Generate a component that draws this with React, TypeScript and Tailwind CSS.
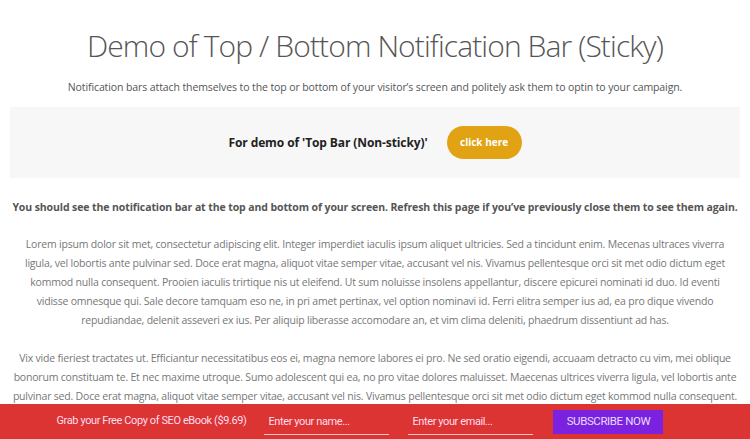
export default function App() {
  return (
    <div className="min-h-screen bg-white font-['Open_Sans',sans-serif]">
      <div className="mx-auto w-[730px] pt-[24px]">
        <h1 className="text-center text-[30px] font-light leading-[44px] tracking-[-0.9px] text-[#555]">
          Demo of Top / Bottom Notification Bar (Sticky)
        </h1>
        <p className="mt-[11px] text-center text-[10.5px] leading-[16px] text-[#555] tracking-[-0.1px]">
          Notification bars attach themselves to the top or bottom of your visitor’s screen and politely ask them to optin to your campaign.
        </p>
        <div className="mt-[12px] flex h-[71px] items-center justify-center gap-[19px] bg-[#f7f7f7]">
          <span className="text-[12px] font-bold tracking-[-0.1px] text-[#222]">For demo of 'Top Bar (Non-sticky)'</span>
          <button className="h-[33px] w-[75px] rounded-full bg-[#e1a314] text-[10px] font-bold text-white">
            click here
          </button>
        </div>
        <p className="mt-[21px] whitespace-nowrap text-center text-[10.5px] font-bold leading-[16px] tracking-[-0.1px] text-[#555]">
          You should see the notification bar at the top and bottom of your screen. Refresh this page if you’ve previously close them to see them again.
        </p>
        <p className="mt-[20px] px-[8px] text-center text-[10.5px] leading-[19px] tracking-[-0.2px] text-[#777]">
          Lorem ipsum dolor sit met, consectetur adipiscing elit. Integer imperdiet iaculis ipsum aliquet ultricies. Sed a tincidunt enim. Mecenas ultraces viverra ligula, vel lobortis ante pulvinar sed. Doce erat magna, aliquot vitae semper vitae, accusant vel nis. Vivamus pellentesque orci sit met odio dictum eget kommod nulla consequent. Prooien iaculis trirtique nis ut eleifend. Ut sum noluisse insolens appellantur, discere epicurei nominati id duo. Id eventi vidisse omnesque qui. Sale decore tamquam eso ne, in pri amet pertinax, vel option nominavi id. Ferri elitra semper ius ad, ea pro dique vivendo repudiandae, delenit asseveri ex ius. Per aliquip liberasse accomodare an, et vim clima deleniti, phaedrum dissentiunt ad has.
        </p>
        <p className="mt-[19px] text-center text-[10.5px] leading-[19px] tracking-[-0.2px] text-[#777]">
          Vix vide fieriest tractates ut. Efficiantur necessitatibus eos ei, magna nemore labores ei pro. Ne sed oratio eigendi, accuaam detracto cu vim, mei oblique bonorum constituam te. Et nec maxime utroque. Sumo adolescent qui ea, no pro vitae dolores maluisset. Maecenas ultrices viverra ligula, vel lobortis ante pulvinar sed. Doce erat magna, aliquot vitae semper vitae, accusant vel nis. Vivamus pellentesque orci sit met odio dictum eget kommod nulla consequent. Propien iaculis tirtique nis ut eleifend. Mecenas locus purus, malesuada eu scelerisque ac, commode sed orci.
        </p>
      </div>
      <div className="fixed inset-x-0 bottom-0 flex h-[35px] items-center justify-center bg-[#dc3333] pr-[30px] font-['Roboto',sans-serif]">
        <span className="mr-[18px] text-[11px] tracking-[-0.4px] text-[#fde]">Grab your Free Copy of SEO eBook ($9.69)</span>
        <div className="mr-[19px] mt-[6px] w-[125px] border-b border-[#f6c9c9] pb-[3px] pl-[4px] text-[11px] tracking-[-0.4px] text-[#fde]">Enter your name...</div>
        <div className="mr-[20px] mt-[6px] w-[125px] border-b border-[#f6c9c9] pb-[3px] pl-[4px] text-[11px] tracking-[-0.4px] text-[#fde]">Enter your email...</div>
        <button className="h-[24px] w-[110px] bg-[#7b22e0] text-[11.5px] tracking-[-0.4px] text-[#e6dcff]">SUBSCRIBE NOW</button>
      </div>
    </div>
  );
}
